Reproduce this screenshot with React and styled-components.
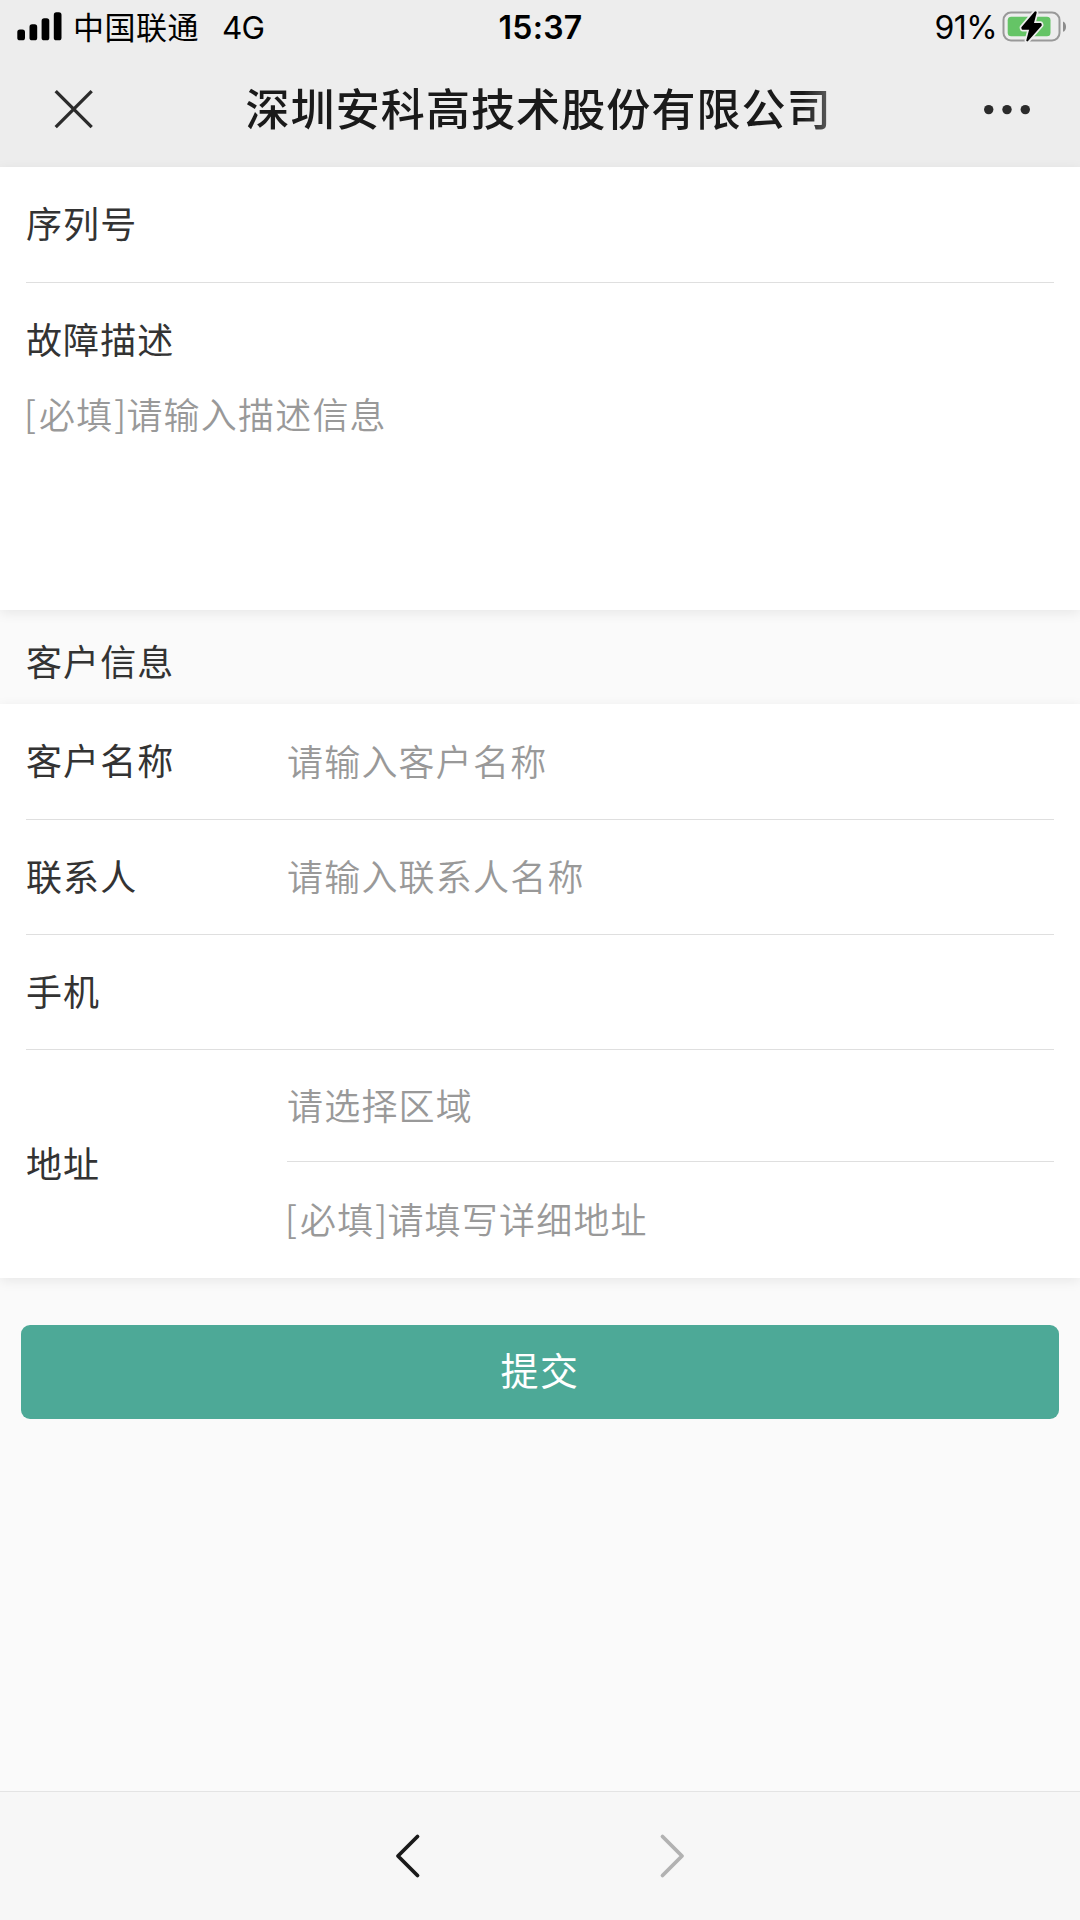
import React from "react";
import styled, { createGlobalStyle } from "styled-components";

const GlobalStyle = createGlobalStyle`
  * { box-sizing: border-box; }
  body {
    margin: 0;
    background: #fafafa;
    font-family: Inter, "Noto Sans CJK SC", sans-serif;
  }
`;

const Screen = styled.div`
  display: flex;
  flex-direction: column;
  width: 1080px;
  height: 1920px;
  overflow: hidden;
  background: #fafafa;
`;

const Header = styled.header`
  flex: none;
  height: 167px;
  background: #ededed;
`;

const StatusBar = styled.div`
  display: grid;
  grid-template-columns: 1fr auto 1fr;
  align-items: center;
  height: 54px;
  padding: 0 13px 0 17px;
  color: #000;
  font-size: 31px;
  line-height: 54px;
  white-space: nowrap;
`;

const StatusGroup = styled.div`
  display: flex;
  align-items: center;
  justify-content: ${(p) => p.$justify || "flex-start"};
`;

const Carrier = styled.span`
  margin-left: 11px;
  padding-bottom: 3px;
  font-family: "Noto Sans CJK SC", sans-serif;
  font-size: 31px;
  line-height: 51px;
  letter-spacing: 0.5px;
`;

const Network = styled.span`
  margin-left: 23px;
  padding-top: 1px;
  font-size: 31.5px;
  line-height: 53px;
  letter-spacing: -0.8px;
`;

const Clock = styled.span`
  padding: 2px 3px 0 0;
  font-weight: 600;
  font-size: 32px;
  line-height: 52px;
  letter-spacing: 0.3px;
`;

const Percent = styled.span`
  margin-right: 5px;
  padding-top: 2px;
  font-size: 32px;
  line-height: 52px;
  letter-spacing: -0.6px;
`;

const TitleBar = styled.div`
  display: flex;
  align-items: center;
  justify-content: space-between;
  height: 111px;
  padding: 0 48px 0 53px;
`;

const IconButton = styled.button`
  display: flex;
  padding: 0;
  border: 0;
  background: none;
`;

const Title = styled.h1`
  width: 586px;
  margin: 0;
  padding-bottom: 6px;
  color: #1a1a1a;
  font-family: "Noto Sans CJK SC", sans-serif;
  font-size: 44px;
  font-weight: 500;
  line-height: 64px;
  letter-spacing: 1.1px;
  white-space: nowrap;
  mask-image: linear-gradient(to right, #000 95%, rgba(0, 0, 0, 0.65) 100%);
`;

const Card = styled.section`
  position: relative;
  flex: none;
  height: ${(p) => p.$height}px;
  padding: 0 26px;
  background: #fff;
  box-shadow: 0 3px 12px rgba(0, 0, 0, 0.08);
`;

const Row = styled.div`
  display: flex;
  align-items: center;
  height: ${(p) => p.$height || 115}px;
  border-bottom: ${(p) => (p.$last ? "0" : "1px solid #dfdfdf")};
`;

const Label = styled.div`
  flex: none;
  width: 261px;
  padding-bottom: 5px;
  color: #333;
  font-family: "Noto Sans CJK SC", sans-serif;
  font-size: 36px;
  line-height: 50px;
  letter-spacing: 1.1px;
`;

const Hint = styled.div`
  padding-bottom: 4px;
  color: #999;
  font-family: "Noto Sans CJK SC", sans-serif;
  font-size: 36px;
  font-weight: 350;
  line-height: 50px;
  letter-spacing: 1.2px;
  white-space: nowrap;
`;

const Bracket = styled.span`
  display: inline-block;
  width: 13px;
  text-indent: ${(p) => (p.$closing ? "0.8px" : "-2px")};
  transform: translateY(-1.5px);
`;

const Description = styled.div`
  display: flex;
  flex-direction: column;
  gap: 20px;
  padding-top: 30px;
`;

const SectionTitle = styled.div`
  display: flex;
  flex: none;
  align-items: center;
  height: 94px;
  padding: 11px 26px 0;
`;

const AddressFields = styled.div`
  flex: 1;
`;

const Actions = styled.main`
  flex: 1;
  padding: 47px 21px 0;
`;

const Submit = styled.button`
  display: block;
  width: 100%;
  height: 94px;
  padding: 0 0 6px;
  border: 0;
  border-radius: 9px;
  background: #4da997;
  color: #fff;
  font-family: "Noto Sans CJK SC", sans-serif;
  font-size: 38px;
  line-height: 88px;
  letter-spacing: 1.5px;
`;

const BottomNav = styled.nav`
  display: flex;
  flex: none;
  align-items: center;
  justify-content: center;
  gap: 238px;
  height: 129px;
  border-top: 1px solid #e4e4e4;
  background: #f7f7f7;
`;

const Signal = () => (
  <svg width="45" height="30" viewBox="0 0 45 30" fill="#000">
    <rect x="0.3" y="17.5" width="7.7" height="10.8" rx="2.6" />
    <rect x="12.5" y="12.3" width="7.7" height="16" rx="2.6" />
    <rect x="24.6" y="6.3" width="7.7" height="22" rx="2.6" />
    <rect x="36.8" y="0.3" width="7.7" height="28" rx="2.6" />
  </svg>
);

const boltPath = "M33.3 2.3 20.3 17.6 20.6 18.7H28.4L25.3 30.4 38.8 15 38.5 13.9H30.7L33.7 2.5z";

const Battery = () => (
  <svg width="65" height="34" viewBox="0 0 65 34">
    <rect x="1.5" y="2.6" width="56" height="27.8" rx="7.5" fill="none" stroke="#999" strokeWidth="2" />
    <rect x="5.7" y="6.8" width="42.8" height="19.4" rx="3.5" fill="#65c466" />
    <path d="M61 11.4c4 1.2 4 9.2 0 10.4z" fill="#8c8c8c" />
    <path d={boltPath} fill="#ededed" stroke="#ededed" strokeWidth="5.4" strokeLinejoin="round" />
    <path d={boltPath} fill="#000" stroke="#000" strokeWidth="2" strokeLinejoin="round" />
  </svg>
);

const Close = () => (
  <svg width="42" height="42" viewBox="0 0 42 42" fill="none" stroke="#2b2b2b" strokeWidth="3.3">
    <path d="M2.7 2.2 38.7 38.2M38.7 2.2 2.7 38.2" />
  </svg>
);

const More = () => (
  <svg width="50" height="12" viewBox="0 0 50 12" fill="#2b2b2b">
    <circle cx="6.7" cy="5.6" r="4.7" />
    <circle cx="25" cy="5.6" r="4.7" />
    <circle cx="43.3" cy="5.6" r="4.7" />
  </svg>
);

const Chevron = ({ points, color }) => (
  <svg width="26" height="48" viewBox="0 0 26 48" fill="none">
    <polyline points={points} stroke={color} strokeWidth="3.8" strokeLinecap="round" strokeLinejoin="round" />
  </svg>
);

const Required = () => (
  <>
    <Bracket>[</Bracket>必填<Bracket $closing>]</Bracket>
  </>
);

export default function App() {
  return (
    <Screen>
      <GlobalStyle />
      <Header>
        <StatusBar>
          <StatusGroup>
            <Signal />
            <Carrier>中国联通</Carrier>
            <Network>4G</Network>
          </StatusGroup>
          <Clock>15:37</Clock>
          <StatusGroup $justify="flex-end">
            <Percent>91%</Percent>
            <Battery />
          </StatusGroup>
        </StatusBar>
        <TitleBar>
          <IconButton aria-label="关闭"><Close /></IconButton>
          <Title>深圳安科高技术股份有限公司</Title>
          <IconButton aria-label="更多"><More /></IconButton>
        </TitleBar>
      </Header>

      <Card $height={443}>
        <Row $height={116}>
          <Label>序列号</Label>
        </Row>
        <Description>
          <Label>故障描述</Label>
          <Hint><Required />请输入描述信息</Hint>
        </Description>
      </Card>

      <SectionTitle>
        <Label>客户信息</Label>
      </SectionTitle>

      <Card $height={574}>
        <Row $height={116}>
          <Label>客户名称</Label>
          <Hint>请输入客户名称</Hint>
        </Row>
        <Row>
          <Label>联系人</Label>
          <Hint>请输入联系人名称</Hint>
        </Row>
        <Row>
          <Label>手机</Label>
        </Row>
        <Row $height={228} $last>
          <Label>地址</Label>
          <AddressFields>
            <Row $height={112}>
              <Hint>请选择区域</Hint>
            </Row>
            <Row $height={116} $last>
              <Hint><Required />请填写详细地址</Hint>
            </Row>
          </AddressFields>
        </Row>
      </Card>

      <Actions>
        <Submit>提交</Submit>
      </Actions>

      <BottomNav>
        <Chevron points="22.5,4.5 3,24 22.5,43.5" color="#1a1a1a" />
        <Chevron points="3.5,4.5 23,24 3.5,43.5" color="#b2b2b2" />
      </BottomNav>
    </Screen>
  );
}
